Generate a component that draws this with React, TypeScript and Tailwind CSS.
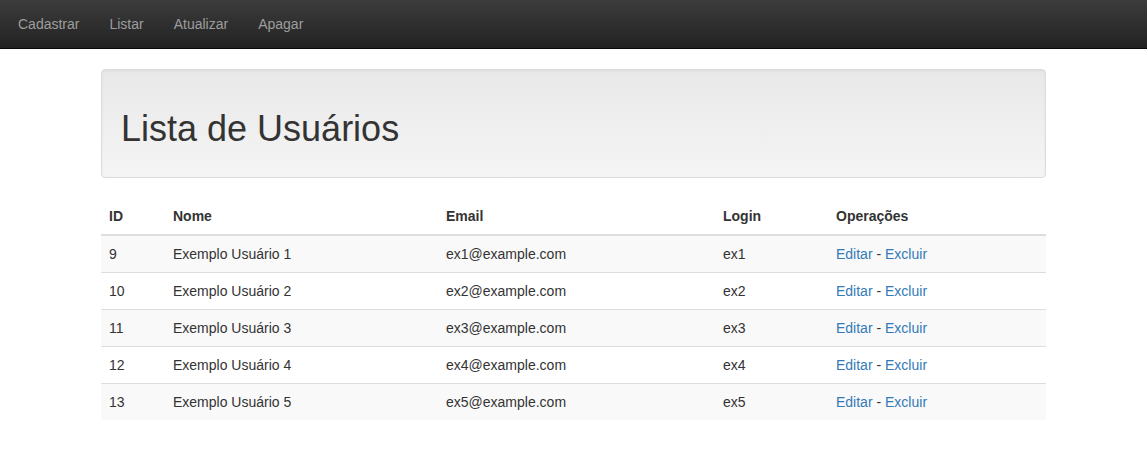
import React from "react";

const rows = [
  { id: 9, nome: "Exemplo Usuário 1", email: "ex1@example.com", login: "ex1" },
  { id: 10, nome: "Exemplo Usuário 2", email: "ex2@example.com", login: "ex2" },
  { id: 11, nome: "Exemplo Usuário 3", email: "ex3@example.com", login: "ex3" },
  { id: 12, nome: "Exemplo Usuário 4", email: "ex4@example.com", login: "ex4" },
  { id: 13, nome: "Exemplo Usuário 5", email: "ex5@example.com", login: "ex5" },
];

export default function App() {
  return (
    <div
      className="min-h-[454px] bg-white text-[14px] leading-[20px] text-[#333]"
      style={{ fontFamily: '"Liberation Sans", Arial, sans-serif' }}
    >
      <nav className="h-[49px] border-b border-[#080808] bg-[linear-gradient(to_bottom,#3c3c3c_0%,#222_100%)] px-[3px]">
        <ul className="flex h-[48px] items-center">
          {["Cadastrar", "Listar", "Atualizar", "Apagar"].map((l) => (
            <li key={l}>
              <a className="block px-[15px] py-[14px] text-[#9d9d9d]">{l}</a>
            </li>
          ))}
        </ul>
      </nav>

      <div className="mx-auto mt-[20px] w-[945px]">
        <div className="mb-[20px] rounded-[4px] border border-[#dcdcdc] bg-[linear-gradient(to_bottom,#e8e8e8_0%,#f5f5f5_100%)] p-[19px] shadow-[inset_0_1px_3px_rgba(0,0,0,0.05),0_1px_0_rgba(255,255,255,0.1)]">
          <h1 className="mb-[10px] mt-[20px] text-[36px] font-normal leading-[39px] text-[#333]">
            Lista de Usuários
          </h1>
        </div>

        <table className="w-full table-fixed border-collapse">
          <colgroup>
            <col className="w-[64px]" />
            <col className="w-[273px]" />
            <col className="w-[277px]" />
            <col className="w-[113px]" />
            <col />
          </colgroup>
          <thead>
            <tr>
              {["ID", "Nome", "Email", "Login", "Operações"].map((h) => (
                <th
                  key={h}
                  className="border-b-2 border-[#ddd] p-[8px] text-left align-bottom font-bold"
                >
                  {h}
                </th>
              ))}
            </tr>
          </thead>
          <tbody>
            {rows.map((r, i) => (
              <tr key={r.id} className={i % 2 === 0 ? "bg-[#f9f9f9]" : ""}>
                <td className={`p-[8px] ${i > 0 ? "border-t border-[#ddd]" : ""}`}>{r.id}</td>
                <td className={`p-[8px] ${i > 0 ? "border-t border-[#ddd]" : ""}`}>{r.nome}</td>
                <td className={`p-[8px] ${i > 0 ? "border-t border-[#ddd]" : ""}`}>{r.email}</td>
                <td className={`p-[8px] ${i > 0 ? "border-t border-[#ddd]" : ""}`}>{r.login}</td>
                <td className={`p-[8px] ${i > 0 ? "border-t border-[#ddd]" : ""}`}>
                  <a className="text-[#337ab7]">Editar</a> - <a className="text-[#337ab7]">Excluir</a>
                </td>
              </tr>
            ))}
          </tbody>
        </table>
      </div>
    </div>
  );
}
